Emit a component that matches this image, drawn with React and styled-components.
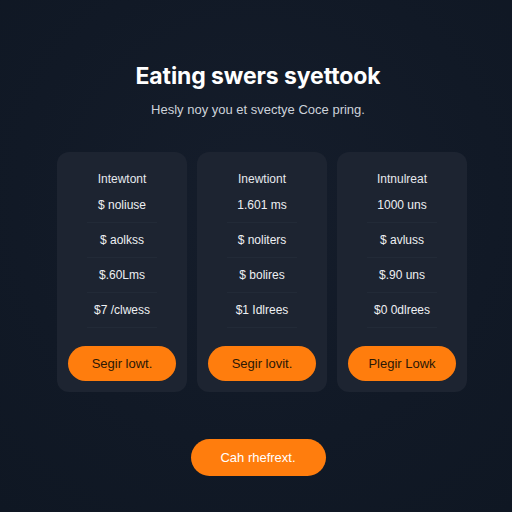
import React from "react";
import styled, { createGlobalStyle } from "styled-components";

const GlobalStyle = createGlobalStyle`
  html, body {
    margin: 0;
    padding: 0;
    background: #111926;
  }
  body {
    font-family: "Liberation Sans", Arial, sans-serif;
  }
`;

const plans = [
  {
    name: "Intewtont",
    rows: ["$ noliuse", "$ aolkss", "$.60Lms", "$7 /clwess"],
    cta: "Segir lowt.",
  },
  {
    name: "Inewtiont",
    rows: ["1.601 ms", "$ noliters", "$ bolires", "$1 Idlrees"],
    cta: "Segir lovit.",
  },
  {
    name: "Intnulreat",
    rows: ["1000 uns", "$ avluss", "$.90 uns", "$0 0dlrees"],
    cta: "Plegir Lowk",
  },
];

const Page = styled.div`
  width: 512px;
  height: 512px;
  box-sizing: border-box;
  padding: 62px 0 0 4px;
  display: flex;
  flex-direction: column;
  align-items: center;
  background: radial-gradient(circle at 50% 40%, #151d2b 0%, #111926 60%, #0f1723 100%);
  overflow: hidden;
`;

const Heading = styled.h1`
  margin: 0;
  font-family: Inter, "Noto Sans", sans-serif;
  font-size: 23px;
  line-height: 28px;
  font-weight: 700;
  color: #ffffff;
  letter-spacing: -0.1px;
`;

const Subtitle = styled.p`
  margin: 11px 0 0;
  font-size: 13px;
  line-height: 18px;
  color: #cdd2da;
`;

const Plans = styled.div`
  margin-top: 33px;
  margin-left: 8px;
  display: flex;
  gap: 10px;
`;

const Card = styled.div`
  width: 130px;
  height: 240px;
  box-sizing: border-box;
  padding: 18px 0 9px;
  border-radius: 12px;
  background: #1d2431;
  display: flex;
  flex-direction: column;
  align-items: center;
`;

const PlanName = styled.div`
  font-size: 12px;
  line-height: 18px;
  color: #e6e9ee;
`;

const Row = styled.div`
  width: 70px;
  height: 35px;
  display: flex;
  align-items: center;
  justify-content: center;
  font-size: 12px;
  color: #eef0f3;
  border-bottom: 1px solid #222a37;
  box-sizing: border-box;
  white-space: nowrap;
`;

const PlanButton = styled.button`
  margin-top: 18px;
  width: 108px;
  height: 35px;
  border: none;
  border-radius: 18px;
  background: #ff7d0d;
  color: #2b1705;
  font-family: "Liberation Sans", Arial, sans-serif;
  font-size: 13px;
  cursor: pointer;
`;

const MainButton = styled.button`
  margin-top: 47px;
  width: 135px;
  height: 37px;
  border: none;
  border-radius: 19px;
  background: #ff7d0d;
  color: #ffffff;
  font-family: "Liberation Sans", Arial, sans-serif;
  font-size: 13px;
  cursor: pointer;
`;

export default function App() {
  return (
    <>
      <GlobalStyle />
      <Page>
        <Heading>Eating swers syettook</Heading>
        <Subtitle>Hesly noy you et svectye Coce pring.</Subtitle>
        <Plans>
          {plans.map((plan) => (
            <Card key={plan.name}>
              <PlanName>{plan.name}</PlanName>
              {plan.rows.map((row) => (
                <Row key={row}>{row}</Row>
              ))}
              <PlanButton>{plan.cta}</PlanButton>
            </Card>
          ))}
        </Plans>
        <MainButton>Cah rhefrext.</MainButton>
      </Page>
    </>
  );
}
